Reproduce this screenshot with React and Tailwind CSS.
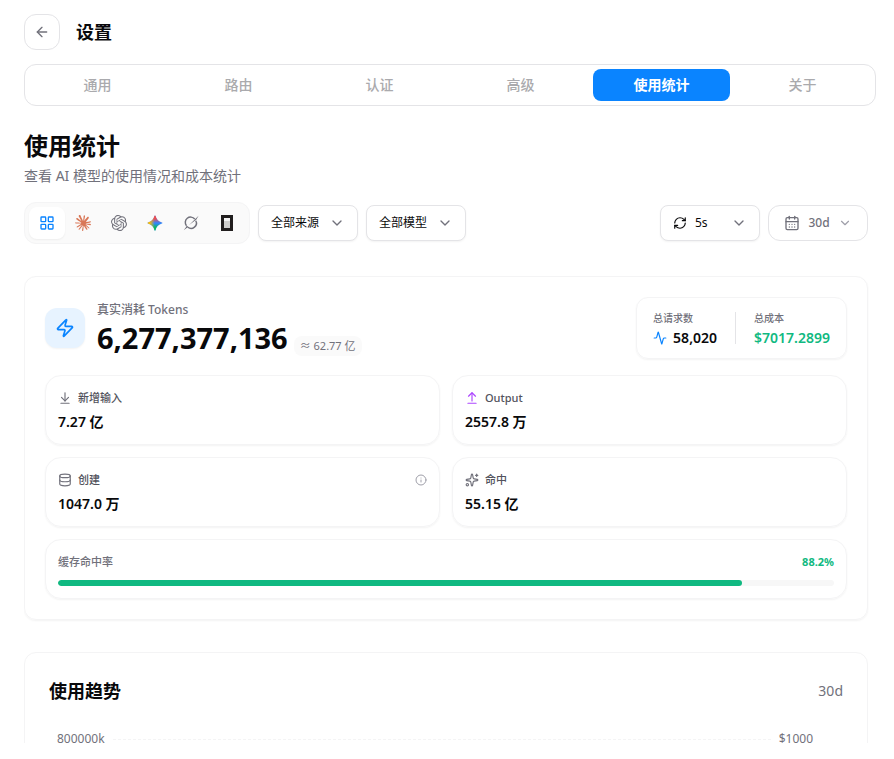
import { useState } from "react";
import {
  Activity,
  ArrowDownToLine,
  ArrowLeft,
  ArrowUpFromLine,
  CalendarDays,
  ChevronDown,
  Database,
  Info,
  LayoutGrid,
  RefreshCw,
  Sparkles,
  Zap,
} from "lucide-react";
import { SiClaude, SiOpenai } from "react-icons/si";

const TABS = ["通用", "路由", "认证", "高级", "使用统计", "关于"];

function GeminiIcon() {
  return (
    <svg viewBox="0 0 24 24" className="size-4">
      <defs>
        <linearGradient id="gem-left" x1="0" y1="0" x2="1" y2="0">
          <stop offset="0.15" stopColor="#fbbc04" />
          <stop offset="0.48" stopColor="#fbbc04" stopOpacity="0" />
        </linearGradient>
        <linearGradient id="gem-top" x1="0" y1="0" x2="0" y2="1">
          <stop offset="0.2" stopColor="#f04a4f" />
          <stop offset="0.5" stopColor="#f04a4f" stopOpacity="0" />
        </linearGradient>
        <linearGradient id="gem-bottom" x1="0" y1="1" x2="0" y2="0">
          <stop offset="0.2" stopColor="#08b962" />
          <stop offset="0.48" stopColor="#08b962" stopOpacity="0" />
        </linearGradient>
      </defs>
      {["#3186ff", "url(#gem-bottom)", "url(#gem-top)", "url(#gem-left)"].map(
        (fill) => (
          <path
            key={fill}
            fill={fill}
            d="M12 0.8c.5 0 .7.3.8.8 1.300 5.100 4.500 8.300 9.600 9.600.5.1.8.3.8.8s-.3.7-.8.8c-5.100 1.300-8.300 4.500-9.600 9.600-.1.5-.3.8-.8.8s-.7-.3-.8-.8c-1.300-5.100-4.500-8.300-9.600-9.600-.5-.1-.8-.3-.8-.8s.3-.7.8-.8c5.100-1.300 8.300-4.500 9.600-9.600.1-.5.3-.8.8-.8z"
          />
        ),
      )}
    </svg>
  );
}

function GrokIcon() {
  return (
    <svg viewBox="0 0 24 24" className="size-4 text-zinc-500">
      <g fill="none" stroke="currentColor" strokeWidth="2.2">
        <path d="M17.600 6.100A7.900 7.900 0 0 0 5.200 16.100" />
        <path d="M7.300 18.400A7.900 7.900 0 0 0 19.200 8.600" />
      </g>
      <path
        fill="currentColor"
        d="M9.200 14.900L17.200 7 23.400 1.200 19.600 7.400 18.200 8.200zM1 22.800l3.400-4.600 1.200-2.600 2.600 2.400-2.600 1.400z"
      />
    </svg>
  );
}

function OpenCodeIcon() {
  return (
    <svg viewBox="0 0 16 16" className="size-4" shapeRendering="crispEdges">
      <path fill="#211e1e" d="M2 0h12v16H2z" />
      <path fill="#f4f4f4" d="M5 3h6v3H5z" />
      <path fill="#cfcecd" d="M5 6h6v7H5z" />
    </svg>
  );
}

const APPS = [
  { id: "all", label: "全部", icon: <LayoutGrid className="size-4 text-[#0a84ff]" /> },
  { id: "claude", label: "Claude", icon: <SiClaude className="size-4 text-[#d97757]" /> },
  { id: "codex", label: "Codex", icon: <SiOpenai className="size-4 text-zinc-500" /> },
  { id: "gemini", label: "Gemini", icon: <GeminiIcon /> },
  { id: "grok", label: "Grok", icon: <GrokIcon /> },
  { id: "opencode", label: "OpenCode", icon: <OpenCodeIcon /> },
];

const TILES = [
  {
    label: "新增输入",
    value: "7.27 亿",
    icon: <ArrowDownToLine className="size-3.5 text-zinc-500" />,
  },
  {
    label: "Output",
    value: "2557.8 万",
    icon: <ArrowUpFromLine className="size-3.5 text-purple-500" />,
  },
  {
    label: "创建",
    value: "1047.0 万",
    icon: <Database className="size-3.5 text-zinc-500" />,
    info: true,
  },
  {
    label: "命中",
    value: "55.15 亿",
    icon: <Sparkles className="size-3.5 text-zinc-500" />,
  },
];

function FilterSelect({ label, options, icon }) {
  return (
    <div className="relative h-9 w-[100px]">
      {icon && (
        <span className="pointer-events-none absolute inset-y-0 left-[13px] flex items-center">
          {icon}
        </span>
      )}
      <select
        aria-label={label}
        className={`size-full appearance-none rounded-lg border border-zinc-200 bg-white pr-8 text-xs shadow-xs outline-none ${icon ? "pl-[34px]" : "pl-3"}`}
      >
        {options.map((o) => (
          <option key={o}>{o}</option>
        ))}
      </select>
      <ChevronDown className="pointer-events-none absolute top-2.5 right-[13px] size-4 text-zinc-500" />
    </div>
  );
}

export default function App() {
  const [tab, setTab] = useState("使用统计");
  const [app, setApp] = useState("all");
  const hitRate = 88.2;

  return (
    <div className="flex h-screen flex-col bg-white pt-3.5 pr-[18px] pb-4 pl-6 font-['Noto_Sans','Noto_Sans_CJK_SC',sans-serif] text-zinc-950">
      {/* Header */}
      <header className="flex items-center gap-4">
        <button
          aria-label="返回"
          className="flex size-9 items-center justify-center rounded-xl border border-zinc-200 text-zinc-500"
        >
          <ArrowLeft className="size-4" />
        </button>
        <h1 className="text-lg font-bold">设置</h1>
      </header>

      {/* Tabs */}
      <nav className="mt-3.5 grid shrink-0 grid-cols-6 gap-1 rounded-xl border border-zinc-200 p-1">
        {TABS.map((t) => (
          <button
            key={t}
            onClick={() => setTab(t)}
            className={`h-8 rounded-lg text-sm ${
              tab === t
                ? "bg-[#0a84ff] font-bold text-white"
                : "font-medium text-[#aaaaad]"
            }`}
          >
            {t}
          </button>
        ))}
      </nav>

      <main className="min-h-0 flex-1 overflow-hidden pt-6 pr-2">
        <h2 className="text-2xl font-bold">使用统计</h2>
        <p className="mt-1 text-sm text-zinc-500">
          查看 AI 模型的使用情况和成本统计
        </p>

        {/* Filters */}
        <div className="mt-4 flex items-center gap-2">
          <div className="flex rounded-xl border border-zinc-100 bg-zinc-50 p-1">
            {APPS.map((a) => (
              <button
                key={a.id}
                aria-label={a.label}
                onClick={() => setApp(a.id)}
                className={`flex h-8 w-9 items-center justify-center rounded-lg ${
                  app === a.id ? "bg-white shadow-xs" : ""
                }`}
              >
                {a.icon}
              </button>
            ))}
          </div>
          <FilterSelect label="来源" options={["全部来源"]} />
          <FilterSelect label="模型" options={["全部模型"]} />
          <div className="ml-auto flex gap-2">
            <FilterSelect
              label="刷新间隔"
              options={["5s", "10s", "30s"]}
              icon={<RefreshCw className="size-3.5" />}
            />
            <button className="flex h-9 w-[100px] items-center justify-center gap-2 rounded-xl border border-zinc-200 text-xs font-medium text-zinc-500">
              <CalendarDays className="size-4" />
              30d
              <ChevronDown className="size-3.5 text-zinc-400" />
            </button>
          </div>
        </div>

        {/* Token summary */}
        <section className="mt-8 rounded-xl border border-zinc-100 p-5 shadow-xs">
          <div className="flex items-center justify-between">
            <div className="flex items-center gap-3">
              <div className="flex size-10 items-center justify-center rounded-xl bg-[#e7f3ff] text-[#0a84ff] shadow-xs">
                <Zap className="size-5" />
              </div>
              <div className="pt-0.5">
                <div className="text-xs font-medium text-zinc-500">
                  真实消耗 Tokens
                </div>
                <div className="mt-0.5 flex items-end gap-1.5">
                  <span className="text-[29px] leading-9 font-bold">
                    6,277,377,136
                  </span>
                  <span className="rounded-lg bg-zinc-50 px-1.5 text-[11px] leading-5 text-zinc-500">
                    ≈ 62.77 亿
                  </span>
                </div>
              </div>
            </div>
            <div className="flex items-center rounded-xl border border-zinc-100 px-4 py-3 shadow-xs">
              <div className="pr-4.5">
                <div className="text-[10px] leading-4 font-medium text-zinc-500">
                  总请求数
                </div>
                <div className="mt-1 flex items-center gap-1.5 text-sm leading-4 font-semibold">
                  <Activity className="size-3.5 text-[#0a84ff]" />
                  58,020
                </div>
              </div>
              <div className="h-8 w-px bg-zinc-200" />
              <div className="pl-4.5">
                <div className="text-[10px] leading-4 font-medium text-zinc-500">
                  总成本
                </div>
                <div className="mt-1 text-sm leading-4 font-semibold text-[#10b981]">
                  $7017.2899
                </div>
              </div>
            </div>
          </div>

          <div className="mt-4 grid grid-cols-2 gap-3">
            {TILES.map((t) => (
              <div
                key={t.label}
                className="rounded-2xl border border-zinc-100 p-3 shadow-xs"
              >
                <div className="flex items-center gap-1.5 text-[11px] leading-5 font-medium text-zinc-600">
                  {t.icon}
                  {t.label}
                  {t.info && (
                    <Info className="ml-auto size-3 text-zinc-400" />
                  )}
                </div>
                <div className="mt-1 text-sm font-semibold">{t.value}</div>
              </div>
            ))}

            <div className="col-span-2 rounded-2xl border border-zinc-100 p-3 shadow-xs">
              <div className="flex justify-between text-[11px] leading-5 font-medium text-zinc-500">
                缓存命中率
                <span className="font-bold text-[#10b981]">{hitRate}%</span>
              </div>
              <div className="mt-2 h-1.5 overflow-hidden rounded-full bg-[#f7f7f7]">
                <div
                  className="h-full rounded-full bg-[#10b981]"
                  style={{ width: `${hitRate}%` }}
                />
              </div>
            </div>
          </div>
        </section>

        {/* Trend chart */}
        <section className="mt-8 rounded-xl border border-zinc-100 p-6">
          <div className="flex items-center justify-between">
            <h3 className="text-lg font-bold">使用趋势</h3>
            <span className="text-sm text-zinc-500">30d</span>
          </div>
          <div className="mt-6.5 flex h-80 items-start gap-2 pr-[30px] pl-2 text-xs leading-4 text-zinc-500">
            <span>800000k</span>
            <div className="mt-2 flex-1 border-t border-dashed border-zinc-100" />
            <span>$1000</span>
          </div>
        </section>
      </main>
    </div>
  );
}
